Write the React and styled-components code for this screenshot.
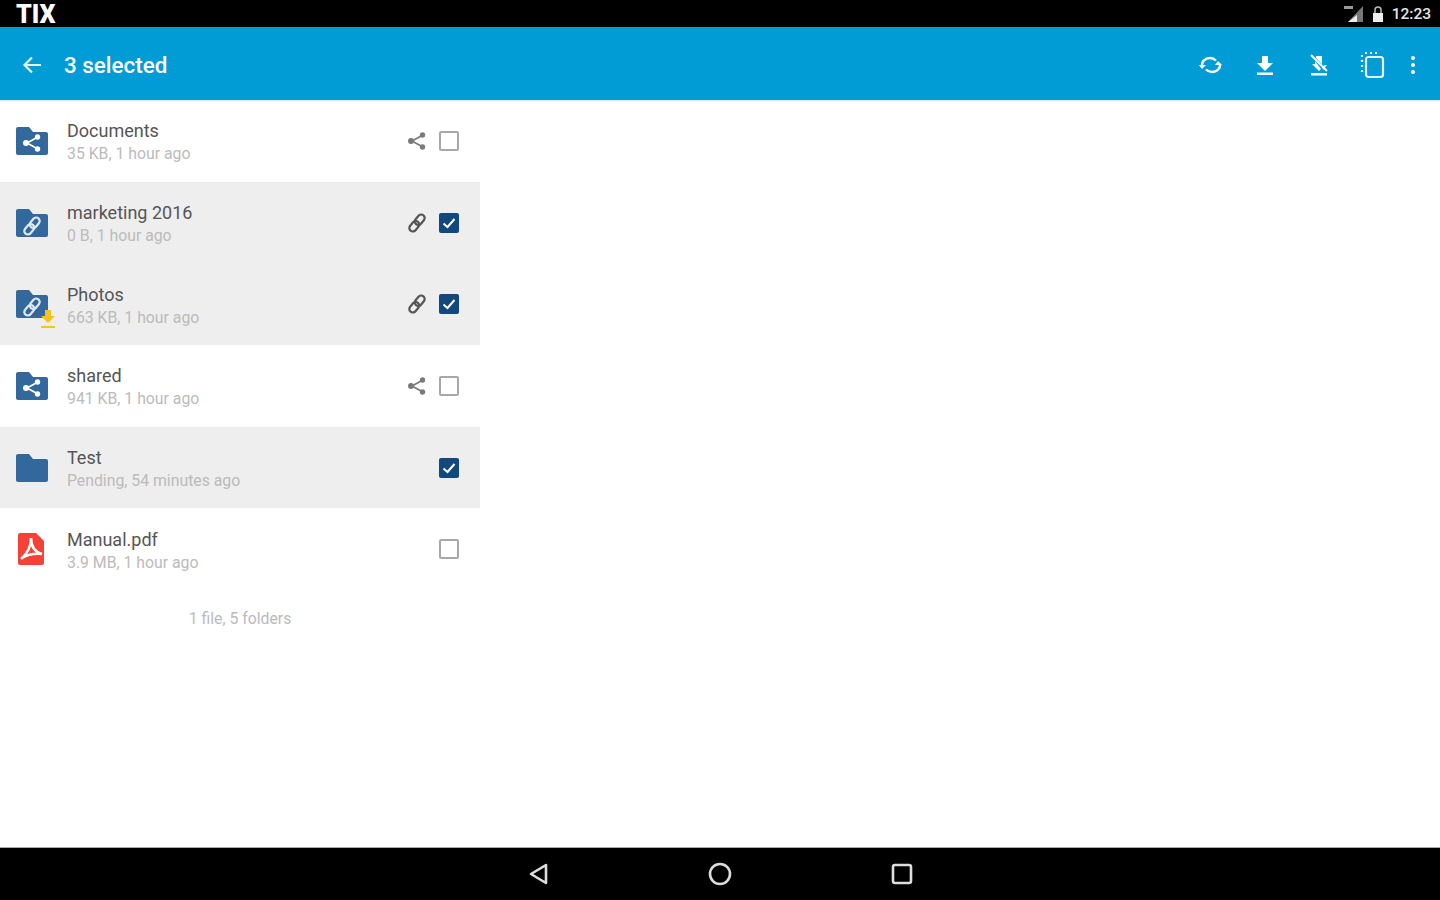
import React from "react";
import styled, { createGlobalStyle } from "styled-components";

const Global = createGlobalStyle`
html, body {
    margin: 0;
    padding: 0;
    background: #fff;
    font-family: Roboto, "Liberation Sans", sans-serif;
}
`

const Page = styled.div`
display: flex;
flex-direction: column;
width: 1440px;
height: 900px;
overflow: hidden;
`

const StatusBar = styled.div`
display: flex;
align-items: center;
justify-content: space-between;
height: 27px;
padding: 1px 9px 0 16px;
box-sizing: border-box;
background: #000;
color: #e4e4e4;
flex-shrink: 0;
`

const Brand = styled.span`
font-size: 25px;
font-weight: 900;
letter-spacing: 0;
color: #fff;
`

const StatusRight = styled.div`
display: flex;
align-items: center;
gap: 8px;
font-size: 15.5px;
font-weight: 500;
`

const Toolbar = styled.header`
display: flex;
align-items: center;
height: 73px;
padding: 3px 14px 0 20px;
box-sizing: border-box;
background: #019cd6;
box-shadow: 0 1px 1px rgba(0, 0, 0, 0.12);
color: #fff;
flex-shrink: 0;
position: relative;
`

const Title = styled.h1`
margin: 0 0 0 20px;
font-size: 22.4px;
font-weight: 500;
flex: 1;
`

const Action = styled.div`
display: flex;
align-items: center;
justify-content: center;
width: ${(p) => p.$width || 54}px;
`

const Main = styled.main`
flex: 1;
width: 480px;
`

const Row = styled.div`
display: flex;
align-items: center;
height: 81.7px;
padding: 0 21px 0 16px;
box-sizing: border-box;
background: ${(p) => (p.$selected ? "#eeeeee" : "#fff")};
`

const FileIcon = styled.div`
position: relative;
display: flex;
width: 32px;
height: 32px;
margin-right: 19px;
flex-shrink: 0;
`

const Pending = styled.div`
position: absolute;
right: -7px;
bottom: -8px;
display: flex;
`

const Info = styled.div`
flex: 1;
min-width: 0;
padding-top: 3px;
`

const Name = styled.div`
font-size: 18px;
line-height: 22px;
color: #555;
`

const Meta = styled.div`
margin-top: 2px;
font-size: 15.8px;
line-height: 20px;
color: #bbb;
`

const LinkSlot = styled.div`
display: flex;
align-items: center;
justify-content: center;
width: 20px;
margin-right: 12px;
`

const Check = styled.div`
display: flex;
align-items: center;
justify-content: center;
width: 20px;
height: 20px;
box-sizing: border-box;
border-radius: 2px;
border: ${(p) => (p.$on ? "none" : "2px solid #a8a8a8")};
background: ${(p) => (p.$on ? "#11497f" : "transparent")};
`

const Summary = styled.div`
margin-top: 19px;
text-align: center;
font-size: 15.8px;
line-height: 20px;
color: #bbb;
`

const NavBar = styled.nav`
display: flex;
align-items: center;
justify-content: center;
gap: 146px;
height: 53px;
background: #000;
border-top: 1px solid #aaa;
box-sizing: border-box;
flex-shrink: 0;
`

const FOLDER = "M2 0h11l4 5h13a2 2 0 0 1 2 2v19a2 2 0 0 1-2 2H2a2 2 0 0 1-2-2V2a2 2 0 0 1 2-2z"

const Folder = ({ children }) => (
    <svg width="32" height="28" viewBox="0 0 32 28" style={{ marginTop: 2 }}>
        <path d={FOLDER} fill="#32689b" />
        {children}
    </svg>
)

const ShareMark = ({ color, x = 0, y = 0 }) => (
    <g transform={`translate(${x} ${y})`} stroke={color} fill={color}>
        <path d="M5 10 15 4.500M5 10l10 5.500" strokeWidth="1.700" fill="none" />
        <circle cx="4" cy="10" r="3" stroke="none" />
        <circle cx="15.500" cy="4" r="2.700" stroke="none" />
        <circle cx="15.500" cy="16" r="2.700" stroke="none" />
    </g>
)

const LinkMark = ({ color, x = 0, y = 0 }) => (
    <g transform={`translate(${x} ${y}) rotate(-50 9 9)`} fill="none" stroke={color} strokeWidth="2.200">
        <rect x="-1" y="5.500" width="11.500" height="7" rx="3.500" />
        <rect x="7.500" y="5.500" width="11.500" height="7" rx="3.500" />
    </g>
)

const ROWS = [
    { name: "Documents", meta: "35 KB, 1 hour ago", kind: "share" },
    { name: "marketing 2016", meta: "0 B, 1 hour ago", kind: "link", selected: true },
    { name: "Photos", meta: "663 KB, 1 hour ago", kind: "link", selected: true, pending: true },
    { name: "shared", meta: "941 KB, 1 hour ago", kind: "share" },
    { name: "Test", meta: "Pending, 54 minutes ago", selected: true },
    { name: "Manual.pdf", meta: "3.9 MB, 1 hour ago", kind: "pdf" },
]

function RowIcon({ item }) {
    if (item.kind === "pdf") {
        return (
            <svg width="32" height="34" viewBox="0 0 32 34" style={{ marginTop: -1 }}>
                <path d="M4 1h16l8 8v22a2 2 0 0 1-2 2H4a2 2 0 0 1-2-2V3a2 2 0 0 1 2-2z" fill="#f44336" />
                <path d="M15 6c0 8-3 15-10 21M15 6c0 8 4 14 11 16M6 26c5-3 12-5 20-4" fill="none" stroke="#fff" strokeWidth="2.600" />
            </svg>
        )
    }
    return (
        <Folder>
            {item.kind === "share" && <ShareMark color="#fff" x={6} y={6} />}
            {item.kind === "link" && <LinkMark color="#dfe8f0" x={7} y={8} />}
        </Folder>
    )
}

function FileRow({ item }) {
    return (
        <Row $selected={item.selected}>
            <FileIcon>
                <RowIcon item={item} />
                {item.pending && (
                    <Pending>
                        <svg width="14" height="18" viewBox="0 0 14 18">
                            <path d="M4 0h6v6h4l-7 7-7-7h4z" fill="#f8c21c" />
                            <rect x="0" y="16" width="14" height="2" fill="#f8c21c" />
                        </svg>
                    </Pending>
                )}
            </FileIcon>
            <Info>
                <Name>{item.name}</Name>
                <Meta>{item.meta}</Meta>
            </Info>
            <LinkSlot>
                {item.kind === "share" && (
                    <svg width="20" height="20" viewBox="0 0 20 20"><ShareMark color="#7a7a7a" /></svg>
                )}
                {item.kind === "link" && (
                    <svg width="20" height="20" viewBox="0 0 20 20"><LinkMark color="#555" x={1} y={1} /></svg>
                )}
            </LinkSlot>
            <Check $on={item.selected}>
                {item.selected && (
                    <svg width="16" height="16" viewBox="0 0 16 16">
                        <path d="M2.500 8.500 6.500 12l7-8" fill="none" stroke="#fff" strokeWidth="2" />
                    </svg>
                )}
            </Check>
        </Row>
    )
}

export default function App() {
    return (
        <Page>
            <Global />
            <StatusBar>
                <Brand>TIX</Brand>
                <StatusRight>
                    <svg width="20" height="16" viewBox="0 0 20 16">
                        <path d="M19 0v16H4z" fill="#777" />
                        <path d="M13 9v7H4z" fill="#eee" />
                        <path d="M0 0h9v3H0z" fill="#999" />
                    </svg>
                    <svg width="12" height="16" viewBox="0 0 12 16">
                        <path d="M3 7V4a3 3 0 0 1 6 0v3" fill="none" stroke="#bbb" strokeWidth="1.500" />
                        <rect x="1" y="7" width="10" height="9" fill="#eee" />
                    </svg>
                    <span>12:23</span>
                </StatusRight>
            </StatusBar>
            <Toolbar>
                <svg width="24" height="24" viewBox="0 0 24 24">
                    <path d="M21 12H5M12 4.500 4.500 12l7.500 7.500" fill="none" stroke="#e4f4fb" strokeWidth="2.200" />
                </svg>
                <Title>3 selected</Title>
                <Action>
                    <svg width="26" height="26" viewBox="0 0 26 26" fill="none" stroke="#fff" strokeWidth="2.400">
                        <path d="M4 14c-.5-4.500 3-8 8-8 2 0 4 .5 6 2.500" />
                        <path d="M22 12c.5 4.500-3 8-8 8-2 0-4-.5-6-2.500" />
                        <path d="M20 9l4 4h-7zM1 13h7l-4 4z" fill="#fff" stroke="none" />
                    </svg>
                </Action>
                <Action>
                    <svg width="24" height="24" viewBox="0 0 24 24" fill="#fff">
                        <path d="M9 3h6v7h5l-8 8-8-8h5zM4 19.500h16V22H4z" />
                    </svg>
                </Action>
                <Action>
                    <svg width="24" height="24" viewBox="0 0 24 24" fill="#fff">
                        <path d="M9 5l6 6v-8H9zM15 13l5-1-4 5zM8 8v3H5l7 7 2-2zM4 20h16v2.500H4z" />
                        <path d="M4 2l16 16" stroke="#fff" strokeWidth="2" />
                    </svg>
                </Action>
                <Action>
                    <svg width="26" height="28" viewBox="0 0 26 28" fill="none" stroke="#e6f5fb" strokeWidth="2.200">
                        <rect x="6" y="6" width="17" height="20" rx="2.500" />
                        <path d="M2 4v2M2 9v2M2 14v2M2 19v2M5 2h2M10 2h2M15 2h2" />
                    </svg>
                </Action>
                <Action $width={26}>
                    <svg width="6" height="20" viewBox="0 0 6 20" fill="#fff">
                        <circle cx="3" cy="3" r="2" />
                        <circle cx="3" cy="10" r="2" />
                        <circle cx="3" cy="17" r="2" />
                    </svg>
                </Action>
            </Toolbar>
            <Main>
                {ROWS.map((item) => <FileRow key={item.name} item={item} />)}
                <Summary>1 file, 5 folders</Summary>
            </Main>
            <NavBar>
                <svg width="36" height="26" viewBox="0 0 36 26" fill="none" stroke="#ddd" strokeWidth="2.600" strokeLinejoin="round">
                    <path d="M26 4v18L11 13z" />
                </svg>
                <svg width="36" height="26" viewBox="0 0 36 26" fill="none" stroke="#ddd" strokeWidth="2.600">
                    <circle cx="18" cy="13" r="10" />
                </svg>
                <svg width="36" height="26" viewBox="0 0 36 26" fill="none" stroke="#ddd" strokeWidth="2.600">
                    <rect x="9" y="4" width="18" height="18" rx="2" />
                </svg>
            </NavBar>
        </Page>
    )
}
